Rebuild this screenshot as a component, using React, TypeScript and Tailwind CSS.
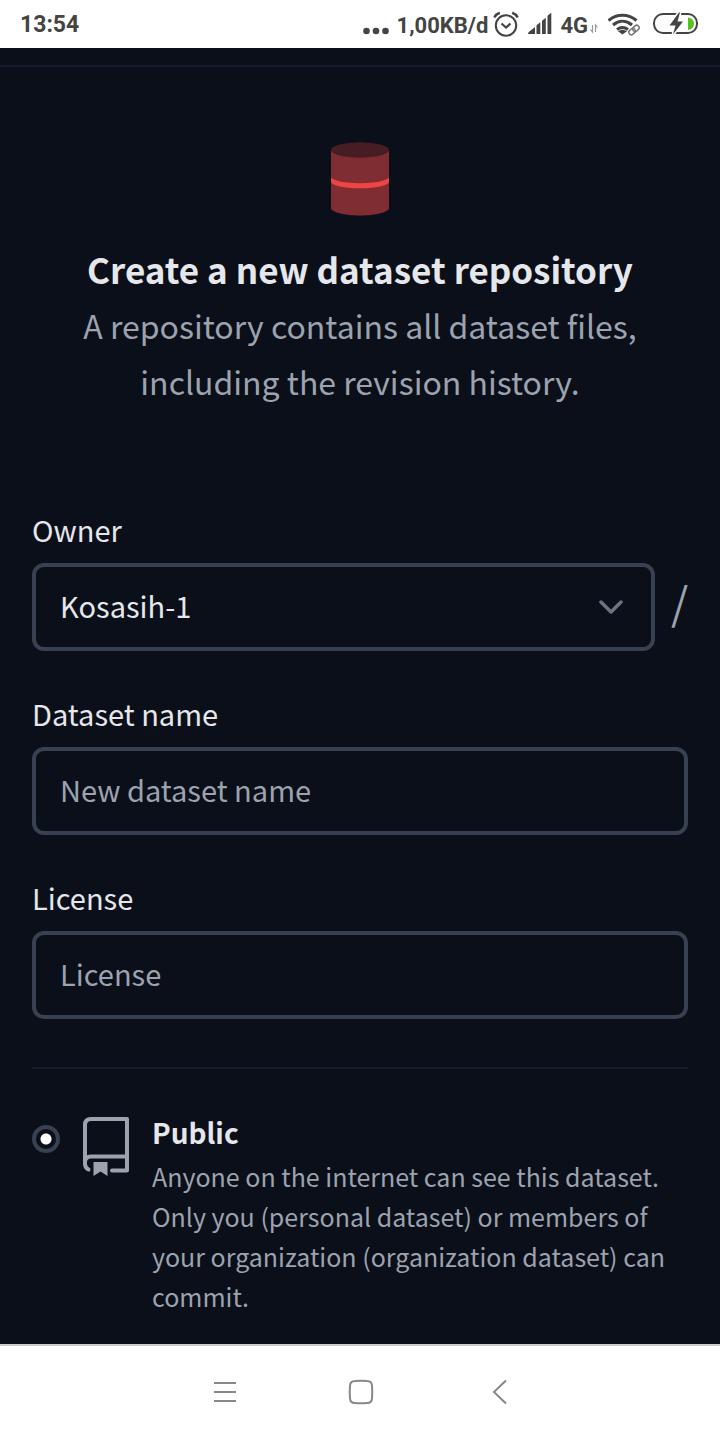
function StatusBar() {
  return (
    <header className="flex h-12 items-center justify-between bg-white px-5 font-['Roboto',sans-serif] text-[22px] font-bold text-[#444444]">
      <time className="pt-0.5 text-[23px]">13:54</time>
      <div className="flex items-center">
        <svg className="mr-2 h-12 w-[26px]" viewBox="0 0 26 48" fill="currentColor" aria-hidden="true">
          <circle cx="3.5" cy="31" r="3.3" />
          <circle cx="13" cy="31" r="3.3" />
          <circle cx="22.500" cy="31" r="3.3" />
        </svg>
        <span className="pt-0.5">1,00KB/d</span>
        <svg className="ml-1 h-12 w-7" viewBox="0 0 28 48" fill="none" stroke="currentColor" strokeWidth="2" aria-label="Alarm">
          <circle cx="14" cy="25.500" r="10.200" />
          <path d="M9.500 23.500l4.500 4 4.500-4" strokeWidth="2.200" />
          <path d="M2.300 17.500c1.200-2.200 3-3.800 5.500-4.700M25.700 17.500c-1.200-2.200-3-3.800-5.500-4.700" strokeWidth="2.500" />
        </svg>
        <svg className="mr-2 ml-2 h-12 w-6" viewBox="0 0 24 48" fill="currentColor" aria-label="Signal">
          <path d="M0 34q0-2 2-3l5-4v7zM8.500 25.200l3.800-3V34H8.500zM14 20.800l3.800-3V34H14zM19.500 15.800l3.800-3V34h-3.800z" />
        </svg>
        <span className="pt-0.5">4G</span>
        <svg className="mr-2 ml-0.5 h-12 w-2" viewBox="0 0 8 48" fill="none" stroke="#999999" strokeWidth="1.200" aria-hidden="true">
          <path d="M2.500 25v7L.5 29.500M5.500 32v-7l2 2.500" />
        </svg>
        <svg className="mr-3 ml-0.5 h-12 w-8" viewBox="0 0 32 48" fill="none" stroke="currentColor" strokeWidth="3" aria-label="Wi-Fi">
          <path d="M.5 20.500c8-7 20-7 28 0" />
          <path d="M5 25c6-5 13-5 19 0" />
          <path d="M9 29.500c4-3 7-3 11 0" />
          <path d="M10 31.200l4.500 3.300 4.500-3.300c-3-2-6-2-9 0z" fill="currentColor" stroke="none" />
          <path d="M22 33l8-6" stroke="white" strokeWidth="5" />
          <g stroke="#777777" strokeWidth="1.500" transform="rotate(-40 26 30)">
            <rect x="20" y="27.500" width="7" height="5" rx="2.500" />
            <rect x="25" y="27.500" width="7" height="5" rx="2.500" />
          </g>
        </svg>
        <svg className="h-12 w-12" viewBox="0 0 48 48" fill="none" aria-label="Battery charging">
          <rect x="2" y="14" width="43" height="19" rx="9" stroke="#444444" strokeWidth="2" />
          <path d="M36 17.500c8 1 8 11.500 0 12.500z" fill="#52c41a" />
          <path d="M27 12.500L17.500 25.500h6L21 34.500 31 21.500h-5.500L28 12.500z" fill="#444444" stroke="white" strokeWidth="3" paintOrder="stroke" />
        </svg>
      </div>
    </header>
  );
}

function DatasetIcon() {
  return (
    <svg className="h-[74px] w-[58px]" viewBox="0 0 58 74" aria-hidden="true">
      <path d="M0 8v58c0 4 13 7.500 29 7.500S58 70 58 66V8z" fill="#7f2c32" />
      <ellipse cx="29" cy="8" rx="29" ry="7.700" fill="#471d24" />
      <path d="M0 35.500c3 3.500 14 5.700 29 5.700s26-2.200 29-5.700V40c-1 3.500-13 6.300-29 6.300S1 43.500 0 40z" fill="#ef4444" />
    </svg>
  );
}

function RepoIcon() {
  return (
    <svg className="mt-1 h-[60px] w-[46px] shrink-0" viewBox="0 0 46 60" fill="none" stroke="#9ca3af" strokeWidth="4" strokeLinecap="round" strokeLinejoin="round" aria-hidden="true">
      <path d="M5.500 52.500C3.500 51.500 2 49.500 2 47V8q0-6 6-6h36v51.500H29" />
      <path d="M2 45q0-5.500 6-5.500h36" />
      <path d="M10.500 45h14v14l-7-4.500-7 4.500z" fill="#9ca3af" stroke="none" />
    </svg>
  );
}

function TextField({ id, label, placeholder }: { id: string; label: string; placeholder: string }) {
  return (
    <div className="flex flex-col">
      <label htmlFor={id} className="pb-1 leading-[60px]">{label}</label>
      <input
        id={id}
        type="text"
        placeholder={placeholder}
        className="h-[88px] w-full rounded-xl border-4 border-[#374151] bg-transparent px-6 pb-1 placeholder:text-[#9ca3af]"
      />
    </div>
  );
}

function NavigationBar() {
  return (
    <nav className="flex h-24 items-center justify-center border-t-2 border-[#cccccc] bg-white pb-0.5 pl-0.5 text-[#888888]" aria-label="System">
      <button type="button" aria-label="Recent apps" className="flex w-[136px] justify-center">
        <svg className="h-7 w-7" viewBox="0 0 28 28" fill="none" stroke="currentColor" strokeWidth="2">
          <path d="M3 5h22M3 14h22M3 23h22" />
        </svg>
      </button>
      <button type="button" aria-label="Home" className="flex w-[136px] justify-center">
        <svg className="h-7 w-7" viewBox="0 0 28 28" fill="none" stroke="currentColor" strokeWidth="2">
          <path d="M8 3q6-.6 12 0 5 0 5 5 .6 6 0 12 0 5-5 5-6 .6-12 0-5 0-5-5-.6-6 0-12 0-5 5-5z" />
        </svg>
      </button>
      <button type="button" aria-label="Back" className="flex w-[136px] justify-center">
        <svg className="h-7 w-7" viewBox="0 0 28 28" fill="none" stroke="currentColor" strokeWidth="2">
          <path d="M23 2.500L11 14l12 11.500" />
        </svg>
      </button>
    </nav>
  );
}

export default function App() {
  return (
    <div className="flex min-h-screen flex-col bg-[#0b0f19] font-['Noto_Sans_CJK_SC','Noto_Sans',sans-serif] text-[29px] text-[#e5e7eb]">
      <StatusBar />
      <div className="h-[19px] border-b-2 border-[#141c2e]" />
      <main className="flex grow flex-col px-8 pt-[75px]">
        <div className="flex flex-col items-center text-center">
          <DatasetIcon />
          <h1 className="pt-[25px] text-[35px] leading-[56px] font-semibold">Create a new dataset repository</h1>
          <p className="text-[32px] leading-[56px] text-[#9ca3af]">A repository contains all dataset files, including the revision history.</p>
        </div>
        <form className="flex flex-col gap-8 pt-[90px]">
          <div className="flex flex-col">
            <label htmlFor="owner" className="pb-1 leading-[60px]">Owner</label>
            <div className="flex items-center gap-4">
              <div className="relative grow">
                <select id="owner" className="h-[88px] w-full appearance-none rounded-xl border-4 border-[#374151] bg-[#0b0f19] px-6 pb-0.5">
                  <option>Kosasih-1</option>
                </select>
                <svg className="pointer-events-none absolute top-8 right-8 h-6 w-6" viewBox="0 0 24 24" fill="none" stroke="#6b7280" strokeWidth="3.500" strokeLinecap="round" strokeLinejoin="round" aria-hidden="true">
                  <path d="M2 7l10 10L22 7" />
                </svg>
              </div>
              <span className="w-[17px] pb-3 text-center text-[44px] leading-[76px] text-[#9ca3af]">/</span>
            </div>
          </div>
          <TextField id="name" label="Dataset name" placeholder="New dataset name" />
          <TextField id="license" label="License" placeholder="License" />
          <hr className="mt-4 border-t-2 border-[#141c2e]" />
          <label className="flex items-start pt-3">
            <input
              type="radio"
              name="visibility"
              defaultChecked
              className="mt-3 mr-[23px] h-7 w-7 shrink-0 appearance-none rounded-full border-4 border-[#374151] bg-[radial-gradient(circle,white_5px,transparent_6px)]"
            />
            <RepoIcon />
            <span className="flex flex-col pl-[23px]">
              <span className="pb-1 text-[28px] leading-[39px] font-semibold">Public</span>
              <span className="text-[25px] leading-[40px] text-[#9ca3af]">
                Anyone on the internet can see this dataset. Only you (personal dataset) or members of your organization (organization dataset) can commit.
              </span>
            </span>
          </label>
        </form>
      </main>
      <NavigationBar />
    </div>
  );
}
